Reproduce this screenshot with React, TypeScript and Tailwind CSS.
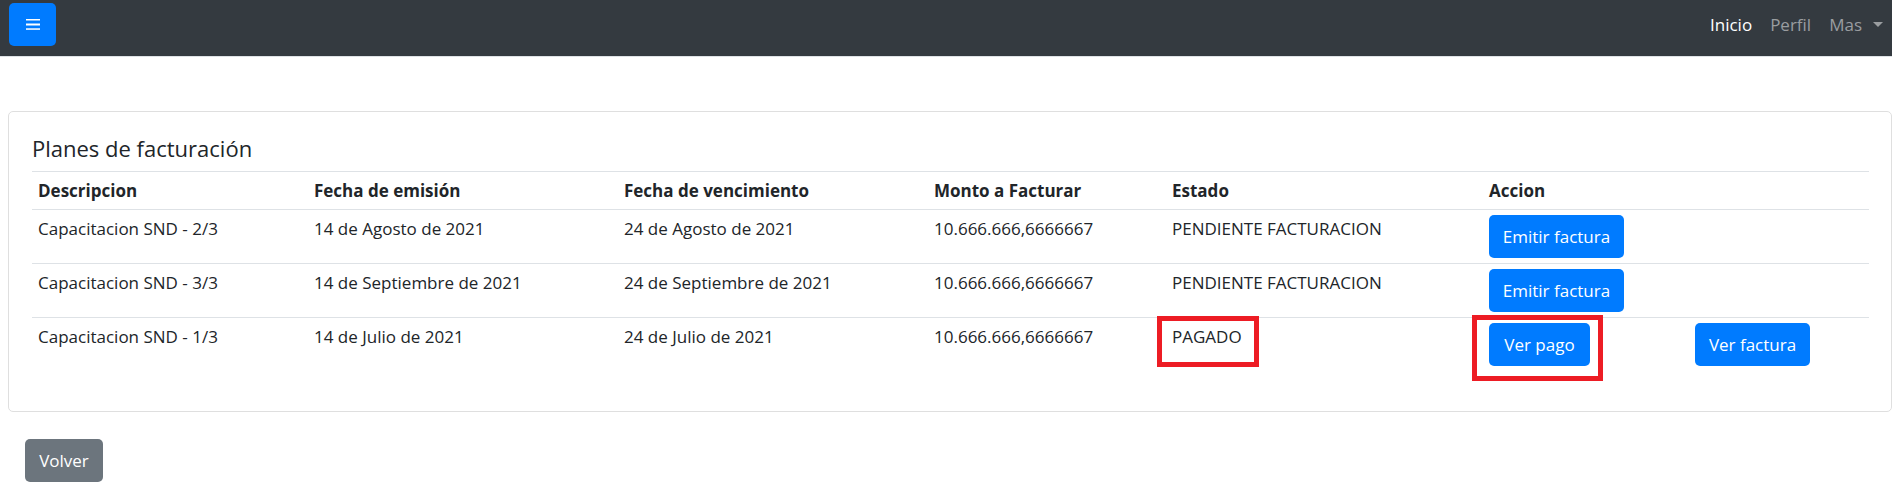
import React from 'react';

type Plan = {
  descripcion: string;
  emision: string;
  vencimiento: string;
  monto: string;
  estado: string;
  pagado: boolean;
};

const PLANES: Plan[] = [
  { descripcion: 'Capacitacion SND - 2/3', emision: '14 de Agosto de 2021', vencimiento: '24 de Agosto de 2021', monto: '10.666.666,6666667', estado: 'PENDIENTE FACTURACION', pagado: false },
  { descripcion: 'Capacitacion SND - 3/3', emision: '14 de Septiembre de 2021', vencimiento: '24 de Septiembre de 2021', monto: '10.666.666,6666667', estado: 'PENDIENTE FACTURACION', pagado: false },
  { descripcion: 'Capacitacion SND - 1/3', emision: '14 de Julio de 2021', vencimiento: '24 de Julio de 2021', monto: '10.666.666,6666667', estado: 'PAGADO', pagado: true },
];

const btnBlue = 'h-[43px] rounded-[5px] bg-[#007bff] text-white text-[17px] leading-[27px] text-center';

export default function App() {
  return (
    <div className="min-h-screen bg-white text-[#212529] font-['Open_Sans',sans-serif]">
      {/* navbar */}
      <nav className="h-[57px] bg-[#343a40] border-b border-[#dee2e6] flex items-start justify-between pl-[9px] pt-[3px]">
        <button className="w-[47px] h-[43px] rounded-[5px] bg-[#007bff] flex items-center justify-center">
          <svg width="14" height="11" viewBox="0 0 14 11" fill="#ffffff">
            <rect x="0" y="0" width="14" height="1.5" />
            <rect x="0" y="4.5" width="14" height="2" />
            <rect x="0" y="9.3" width="14" height="1.5" />
          </svg>
        </button>
        <ul className="flex h-[43px] items-center text-[17px]">
          <li className="px-[9px] text-white">Inicio</li>
          <li className="px-[9px] text-[#9a9da0]">Perfil</li>
          <li className="px-[9px] text-[#9a9da0] flex items-center">
            Mas
            <span className="ml-[11px] w-0 h-0 border-t-[5px] border-t-[#9a9da0] border-x-[5px] border-x-transparent" />
          </li>
        </ul>
      </nav>

      <main className="pt-[54px]">
        {/* card */}
        <section className="ml-[8px] border border-[#dfdfdf] rounded-[5px] pt-[23px] pl-[23px] pr-[22px] pb-[40px]">
          <h5 className="text-[22px] font-medium leading-[26px] mb-[10px]">Planes de facturación</h5>
          <table className="w-full table-fixed border-collapse text-[17px] leading-[27px]">
            <colgroup>
              <col className="w-[276px]" />
              <col className="w-[310px]" />
              <col className="w-[310px]" />
              <col className="w-[238px]" />
              <col className="w-[317px]" />
              <col className="w-[206px]" />
              <col />
            </colgroup>
            <thead>
              <tr className="border-t border-[#dee2e6]">
                <th className="text-left font-bold pl-[6px] py-[5px]">Descripcion</th>
                <th className="text-left font-bold pl-[6px] py-[5px]">Fecha de emisión</th>
                <th className="text-left font-bold pl-[6px] py-[5px]">Fecha de vencimiento</th>
                <th className="text-left font-bold pl-[6px] py-[5px]">Monto a Facturar</th>
                <th className="text-left font-bold pl-[6px] py-[5px]">Estado</th>
                <th className="text-left font-bold pl-[6px] py-[5px]">Accion</th>
                <th />
              </tr>
            </thead>
            <tbody>
              {PLANES.map((p) => (
                <tr key={p.descripcion} className="border-t border-[#dee2e6] align-top">
                  <td className="pl-[6px] py-[5px]">{p.descripcion}</td>
                  <td className="pl-[6px] py-[5px]">{p.emision}</td>
                  <td className="pl-[6px] py-[5px]">{p.vencimiento}</td>
                  <td className="pl-[6px] py-[5px]">{p.monto}</td>
                  <td className="relative pl-[6px] py-[5px]">
                    {p.estado}
                    {p.pagado && (
                      <span className="absolute left-[-9px] top-[-2px] w-[102px] h-[51px] border-[5px] border-[#ed1c24]" />
                    )}
                  </td>
                  <td className="relative pl-[6px] py-[5px]">
                    {p.pagado ? (
                      <>
                        <button className={`${btnBlue} w-[101px]`}>Ver pago</button>
                        <span className="absolute left-[-11px] top-[-3px] w-[131px] h-[66px] border-[5px] border-[#ed1c24]" />
                      </>
                    ) : (
                      <button className={`${btnBlue} w-[135px]`}>Emitir factura</button>
                    )}
                  </td>
                  <td className="pl-[6px] py-[5px]">
                    {p.pagado && <button className={`${btnBlue} w-[115px]`}>Ver factura</button>}
                  </td>
                </tr>
              ))}
            </tbody>
          </table>
        </section>

        <div className="pl-[25px] pt-[27px]">
          <button className="w-[78px] h-[43px] rounded-[5px] bg-[#6c757d] text-white text-[17px] leading-[27px]">Volver</button>
        </div>
      </main>
    </div>
  );
}
